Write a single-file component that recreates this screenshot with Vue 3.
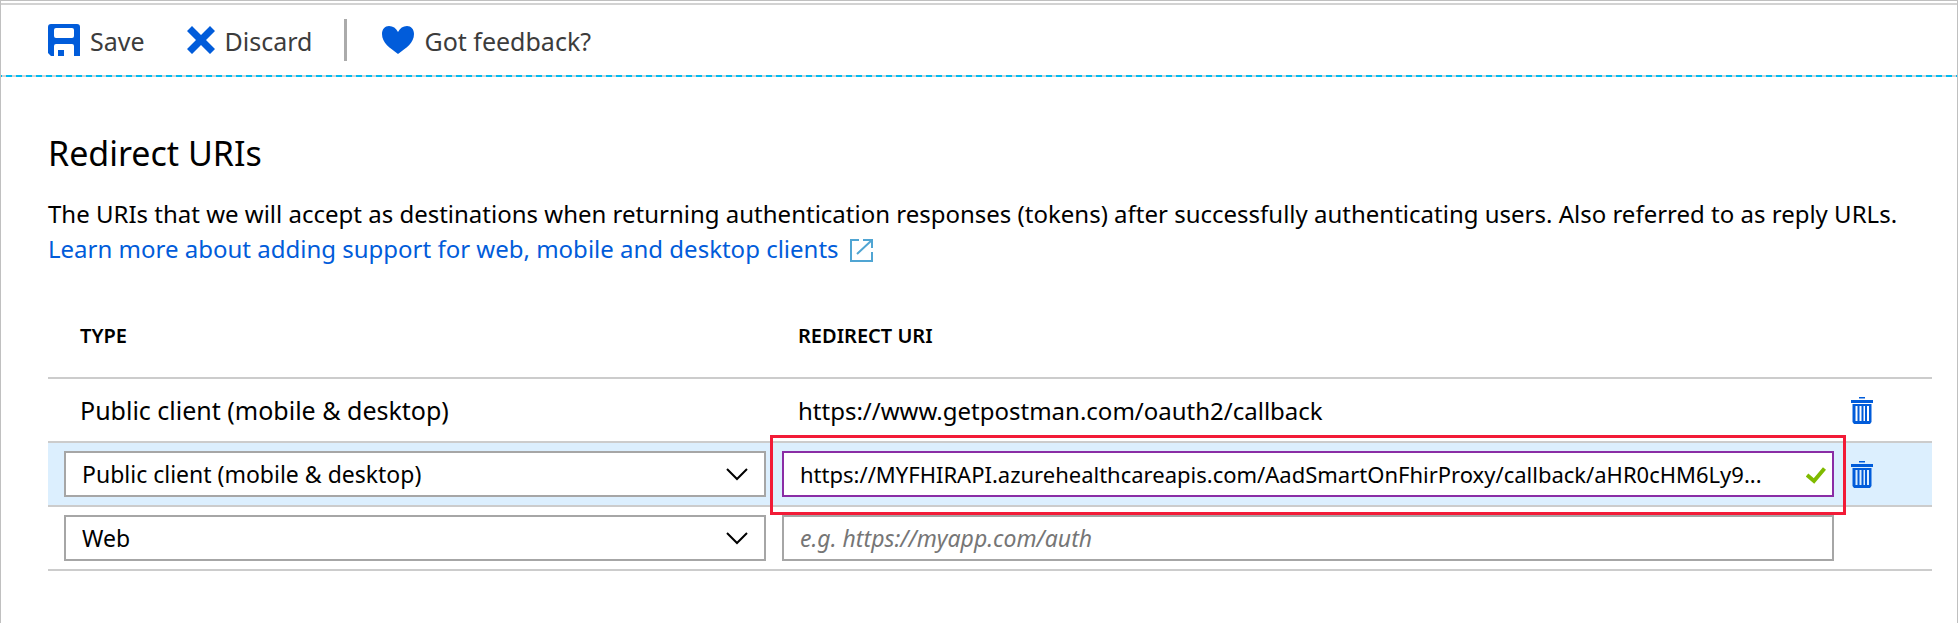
<script setup>
import { ref, reactive } from 'vue'

const types = ['Public client (mobile & desktop)', 'Web']
const saved = ref([{ type: 'Public client (mobile & desktop)', uri: 'https://www.getpostman.com/oauth2/callback' }])
const drafts = reactive([
  {
    type: 'Public client (mobile & desktop)',
    uri: 'https://MYFHIRAPI.azurehealthcareapis.com/AadSmartOnFhirProxy/callback/aHR0cHM6Ly9...',
    active: true
  },
  { type: 'Web', uri: '', active: false }
])
</script>

<template>
  <main class="page">
    <div class="toolbar" role="toolbar" aria-label="Commands">
      <button type="button" class="command">
        <svg class="icon" viewBox="0 0 32 32" width="32" height="32" aria-hidden="true">
          <path fill="#015cda" fill-rule="evenodd" d="M3 0H29Q32 0 32 3V32H26V22Q26 20 24 20H8Q6 20 6 22V32H3L0 29V3Q0 0 3 0ZM8 4Q6 4 6 6V12Q6 14 8 14H24Q26 14 26 12V6Q26 4 24 4ZM10 26H16V32H10Z" />
        </svg>
        <span>Save</span>
      </button>
      <button type="button" class="command">
        <svg class="icon" viewBox="0 0 28 28" width="28" height="28" aria-hidden="true">
          <path fill="#015cda" d="M5 0L14 9L23 0L28 5L19 14L28 23L23 28L14 19L5 28L0 23L9 14L0 5Z" />
        </svg>
        <span>Discard</span>
      </button>
      <span class="divider"></span>
      <button type="button" class="command">
        <svg class="icon" viewBox="0 0 32 28" width="32" height="28" aria-hidden="true">
          <path fill="#015cda" d="M16 6C18 2 21 0 25 0C29 0 32 3 32 8C32 17 24 22 16 28C8 22 0 17 0 8C0 3 3 0 7 0C11 0 14 2 16 6Z" />
        </svg>
        <span>Got feedback?</span>
      </button>
    </div>

    <section class="content">
      <h1>Redirect URIs</h1>
      <p>
        The URIs that we will accept as destinations when returning authentication responses (tokens) after successfully authenticating users. Also referred to as reply URLs.
        <a href="#">Learn more about adding support for web, mobile and desktop clients<svg class="external" viewBox="0 0 24 24" width="24" height="24" aria-hidden="true">
          <path fill="none" stroke="#50a5d3" stroke-width="2" d="M10 2H2V23H23V14M14 2H23V10M8 16L23 2" />
        </svg></a>
      </p>

      <table>
        <colgroup><col class="col-type" /><col /><col class="col-action" /></colgroup>
        <thead>
          <tr>
            <th scope="col">Type</th>
            <th scope="col">Redirect URI</th>
            <td></td>
          </tr>
        </thead>
        <tbody>
          <tr v-for="(row, i) in saved" :key="'s' + i">
            <td class="plain">{{ row.type }}</td>
            <td class="plain">{{ row.uri }}</td>
            <td class="action">
              <button type="button" class="delete" aria-label="Delete" @click="saved.splice(i, 1)">
                <svg viewBox="0 0 22 27" width="22" height="27" aria-hidden="true">
                  <path fill="#015cda" fill-rule="evenodd" d="M8 0H14V1.500H8ZM0 3H22V6H0ZM1.500 7H20.500V25L19 27H3L1.500 25ZM4.500 9V24H6.500V9ZM8.500 9V24H10.500V9ZM12.500 9V24H14V9ZM16 9V24H18V9Z" />
                </svg>
              </button>
            </td>
          </tr>
          <tr v-for="(row, i) in drafts" :key="'d' + i" :class="{ active: row.active }">
            <td>
              <div class="field">
                <select v-model="row.type" aria-label="Type">
                  <option v-for="t in types" :key="t">{{ t }}</option>
                </select>
                <svg class="chevron" viewBox="0 0 22 13" width="22" height="13" aria-hidden="true">
                  <path fill="none" stroke="#000" stroke-width="2" d="M1 1L11 11L21 1" />
                </svg>
              </div>
            </td>
            <td>
              <div class="field" :class="{ highlighted: row.active }">
                <input v-model="row.uri" type="text" aria-label="Redirect URI" placeholder="e.g. https://myapp.com/auth" spellcheck="false" />
                <svg v-if="row.active" class="valid" viewBox="0 0 20 17" width="20" height="17" aria-hidden="true">
                  <path fill="none" stroke="#7fba00" stroke-width="4" d="M1 8L8 14L18.500 1.500" />
                </svg>
              </div>
            </td>
            <td class="action">
              <button v-if="row.active" type="button" class="delete" aria-label="Delete">
                <svg viewBox="0 0 22 27" width="22" height="27" aria-hidden="true">
                  <path fill="#015cda" fill-rule="evenodd" d="M8 0H14V1.500H8ZM0 3H22V6H0ZM1.500 7H20.500V25L19 27H3L1.500 25ZM4.500 9V24H6.500V9ZM8.500 9V24H10.500V9ZM12.500 9V24H14V9ZM16 9V24H18V9Z" />
                </svg>
              </button>
            </td>
          </tr>
        </tbody>
      </table>
    </section>
  </main>
</template>

<style>
body {
  margin: 0;
}
</style>

<style scoped>
.page {
  box-sizing: border-box;
  min-height: 100vh;
  padding-top: 2px;
  border: 1px solid #c0c0c0;
  background: #fff;
  color: #000;
  font-family: "Noto Sans", "Open Sans", sans-serif;
  font-size: 24px;
}

.toolbar {
  display: flex;
  align-items: center;
  height: 70px;
  padding: 0 47px 2px;
  border-top: 2px solid #d2d2d2;
  background: repeating-linear-gradient(90deg, #00bcf2 0 1px, #d2d2d2 1px 5px, #00bcf2 5px 10px) bottom / 100% 2px no-repeat;
}

.command {
  display: flex;
  align-items: center;
  gap: 10px;
  padding: 0;
  border: 0;
  background: none;
  color: #3c3c3c;
  font: inherit;
  font-size: 25px;
  line-height: 32px;
  cursor: pointer;
}

.command span {
  padding-top: 2px;
}

.command + .command {
  margin-left: 42px;
}

.icon {
  flex: none;
}

.divider {
  width: 3px;
  height: 42px;
  margin: 0 35px 0 32px;
  background: #ababab;
}

.content {
  padding: 52px 25px 52px 47px;
}

h1 {
  margin: 0 0 19px;
  font-size: 34px;
  font-weight: 400;
  line-height: 48px;
}

p {
  margin: 0;
  line-height: 35px;
}

a {
  display: table;
  color: #015cda;
  text-decoration: none;
}

.external {
  margin-left: 10px;
  vertical-align: -4px;
}

table {
  width: 100%;
  margin-top: 28px;
  border-spacing: 0;
  table-layout: fixed;
}

.col-type {
  width: 726px;
}

.col-action {
  width: 90px;
}

th,
td {
  height: 62px;
  padding: 0 8px;
  border-bottom: 2px solid #ccc;
  text-align: left;
}

thead th,
thead td {
  height: 83px;
}

th {
  padding: 0 24px;
  font-size: 20px;
  font-weight: 600;
  text-transform: uppercase;
}

.plain {
  padding: 0 24px;
}

td:first-child {
  padding-left: 16px;
}

th:first-child,
.plain:first-child {
  padding-left: 32px;
}

.plain:first-child {
  font-size: 25px;
}

.active td {
  background: #dceffe;
}

.field {
  position: relative;
}

input,
select {
  box-sizing: border-box;
  display: block;
  width: 100%;
  height: 46px;
  margin: 0;
  padding: 0 16px;
  border: 2px solid #a6a6a6;
  border-radius: 0;
  outline: 0;
  appearance: none;
  background: #fff;
  color: #000;
  font: inherit;
  font-size: 22px;
}

select,
input::placeholder {
  font-size: 23px;
}

input::placeholder {
  color: #767676;
  font-style: italic;
}

.highlighted input {
  padding-right: 40px;
  border-color: #8a2da5;
}

.highlighted::after {
  position: absolute;
  inset: -16px -12px -18px;
  z-index: 1;
  border: 3px solid #f21b37;
  content: "";
  pointer-events: none;
}

.chevron {
  position: absolute;
  top: 17px;
  right: 18px;
  pointer-events: none;
}

.valid {
  position: absolute;
  top: 16px;
  right: 8px;
}

.action {
  padding: 0 9px;
}

.delete {
  display: block;
  padding: 0;
  border: 0;
  background: none;
  cursor: pointer;
}

.delete svg {
  display: block;
}
</style>
